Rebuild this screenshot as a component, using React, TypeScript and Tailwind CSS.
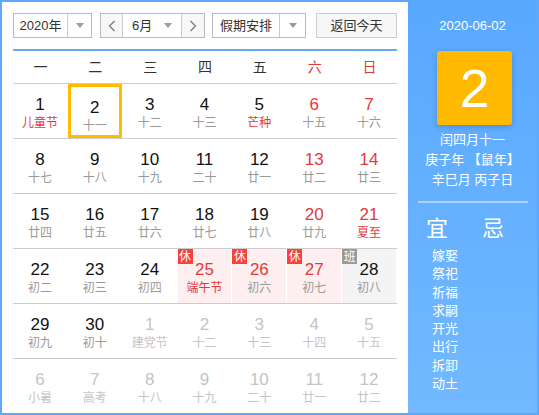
import React from 'react';

type Day = {
  n: number;
  lunar: string;
  other?: boolean;
  red?: boolean;
  lunarRed?: boolean;
  badge?: '休' | '班';
  selected?: boolean;
};

const weeks: Day[][] = [
  [
    { n: 1, lunar: '儿童节', lunarRed: true },
    { n: 2, lunar: '十一', selected: true },
    { n: 3, lunar: '十二' },
    { n: 4, lunar: '十三' },
    { n: 5, lunar: '芒种', lunarRed: true },
    { n: 6, lunar: '十五', red: true },
    { n: 7, lunar: '十六', red: true },
  ],
  [
    { n: 8, lunar: '十七' },
    { n: 9, lunar: '十八' },
    { n: 10, lunar: '十九' },
    { n: 11, lunar: '二十' },
    { n: 12, lunar: '廿一' },
    { n: 13, lunar: '廿二', red: true },
    { n: 14, lunar: '廿三', red: true },
  ],
  [
    { n: 15, lunar: '廿四' },
    { n: 16, lunar: '廿五' },
    { n: 17, lunar: '廿六' },
    { n: 18, lunar: '廿七' },
    { n: 19, lunar: '廿八' },
    { n: 20, lunar: '廿九', red: true },
    { n: 21, lunar: '夏至', red: true, lunarRed: true },
  ],
  [
    { n: 22, lunar: '初二' },
    { n: 23, lunar: '初三' },
    { n: 24, lunar: '初四' },
    { n: 25, lunar: '端午节', red: true, lunarRed: true, badge: '休' },
    { n: 26, lunar: '初六', red: true, badge: '休' },
    { n: 27, lunar: '初七', red: true, badge: '休' },
    { n: 28, lunar: '初八', badge: '班' },
  ],
  [
    { n: 29, lunar: '初九' },
    { n: 30, lunar: '初十' },
    { n: 1, lunar: '建党节', other: true },
    { n: 2, lunar: '十二', other: true },
    { n: 3, lunar: '十三', other: true },
    { n: 4, lunar: '十四', other: true },
    { n: 5, lunar: '十五', other: true },
  ],
  [
    { n: 6, lunar: '小暑', other: true },
    { n: 7, lunar: '高考', other: true },
    { n: 8, lunar: '十八', other: true },
    { n: 9, lunar: '十九', other: true },
    { n: 10, lunar: '二十', other: true },
    { n: 11, lunar: '廿一', other: true },
    { n: 12, lunar: '廿二', other: true },
  ],
];

const weekdays = ['一', '二', '三', '四', '五', '六', '日'];
const yi = ['嫁娶', '祭祀', '祈福', '求嗣', '开光', '出行', '拆卸', '动土'];

function Caret() {
  return (
    <span className="block w-0 h-0 border-l-[4px] border-r-[4px] border-t-[5px] border-l-transparent border-r-transparent border-t-[#999]" />
  );
}

function Chevron({ dir }: { dir: 'left' | 'right' }) {
  return (
    <svg width="8" height="12" viewBox="0 0 8 12" fill="none" stroke="#777" strokeWidth="1.2">
      {dir === 'left' ? <path d="M6.5 1 L1.5 6 L6.5 11" /> : <path d="M1.5 1 L6.5 6 L1.5 11" />}
    </svg>
  );
}

function Cell({ d }: { d: Day }) {
  let numColor = 'text-[#111]';
  let lunarColor = 'text-[#999]';
  if (d.red) numColor = 'text-[#e4393c]';
  if (d.lunarRed) lunarColor = 'text-[#e4393c]';
  if (d.other) {
    numColor = 'text-[#c4c4c4]';
    lunarColor = 'text-[#c4c4c4]';
  }
  let bg = '';
  if (d.badge === '休') bg = 'bg-[#fdefef]';
  if (d.badge === '班') bg = 'bg-[#f4f4f4]';

  return (
    <div className="relative h-[54px] pr-px">
      <div
        className={`relative h-full flex flex-col items-center pt-[10px] ${bg} ${
          d.selected ? 'border-[3px] border-[#ffbb00] pt-[7px]' : ''
        }`}
      >
        {d.badge && (
          <span
            className={`absolute left-0 top-0 w-[15px] h-[15px] flex items-center justify-center text-[12px] leading-none text-white ${
              d.badge === '休' ? 'bg-[#f5433c]' : 'bg-[#999]'
            }`}
          >
            {d.badge}
          </span>
        )}
        <span className={`text-[17px] leading-[21px] ${numColor}`}>{d.n}</span>
        <span className={`text-[12px] leading-[16px] ${lunarColor}`}>{d.lunar}</span>
      </div>
    </div>
  );
}

export default function App() {
  return (
    <div
      className="w-[539px] h-[415px] border-2 border-[#5ea8f8] flex bg-white overflow-hidden"
      style={{ fontFamily: '"Liberation Sans", "Noto Sans CJK SC", sans-serif' }}
    >
      <div className="w-[406px] shrink-0 px-[11px] pt-[11px]">
        <div className="flex items-center h-[25px] text-[13px] text-[#333]">
          <div className="flex h-full w-[79px] border border-[#bbb]">
            <span className="flex-1 flex items-center justify-center border-r border-[#ccc]">2020年</span>
            <span className="w-[23px] flex items-center justify-center">
              <Caret />
            </span>
          </div>
          <div className="flex h-full w-[105px] ml-[8px] border border-[#bbb]">
            <span className="w-[22px] flex items-center justify-center bg-[#f7f7f7] border-r border-[#ccc]">
              <Chevron dir="left" />
            </span>
            <span className="flex-1 flex items-center pl-[9px] pr-[9px] justify-between border-r border-[#ccc]">
              <span>6月</span>
              <Caret />
            </span>
            <span className="w-[22px] flex items-center justify-center bg-[#f7f7f7]">
              <Chevron dir="right" />
            </span>
          </div>
          <div className="flex h-full w-[94px] ml-[7px] border border-[#bbb]">
            <span className="flex-1 flex items-center justify-center border-r border-[#ccc]">假期安排</span>
            <span className="w-[25px] flex items-center justify-center">
              <Caret />
            </span>
          </div>
          <div className="flex h-full w-[81px] ml-[10px] border border-[#ccc] bg-[#f7f7f7] items-center justify-center">
            返回今天
          </div>
        </div>

        <div className="mt-[11px] h-[2px] bg-[#6aaaf2]" />

        <div className="grid grid-cols-7 h-[32px] items-center text-[14px] text-[#333]">
          {weekdays.map((w, i) => (
            <span key={w} className={`text-center ${i >= 5 ? 'text-[#e4393c]' : ''}`}>
              {w}
            </span>
          ))}
        </div>

        {weeks.map((row, ri) => (
          <div key={ri} className="grid grid-cols-7 border-t border-[#ccc]">
            {row.map((d, ci) => (
              <Cell key={ci} d={d} />
            ))}
          </div>
        ))}
      </div>

      <div className="flex-1 bg-gradient-to-b from-[#58a8ff] to-[#72b9ff] text-white flex flex-col items-center">
        <div className="mt-[15px] text-[13px] leading-[18px]">2020-06-02</div>
        <div className="mt-[16px] ml-[4px] w-[75px] h-[74px] rounded-[3px] bg-[#ffb900] shadow-[0_2px_6px_rgba(0,0,0,0.18)] flex items-center justify-center text-[54px] leading-none">
          2
        </div>
        <div className="mt-[5px] text-[13px] leading-[20px] text-center">
          <div>闰四月十一</div>
          <div>庚子年 【鼠年】</div>
          <div>辛巳月 丙子日</div>
        </div>
        <div className="mt-[11px] w-[110px] h-[2px] bg-[#a9d2ff]" />
        <div className="mt-[13px] w-full flex justify-between pl-[18px] pr-[33px] text-[22px] leading-[26px]">
          <span>宜</span>
          <span>忌</span>
        </div>
        <div className="mt-[5px] w-full pl-[24px] text-[13px] leading-[18.3px]">
          {yi.map((t) => (
            <div key={t}>{t}</div>
          ))}
        </div>
      </div>
    </div>
  );
}
